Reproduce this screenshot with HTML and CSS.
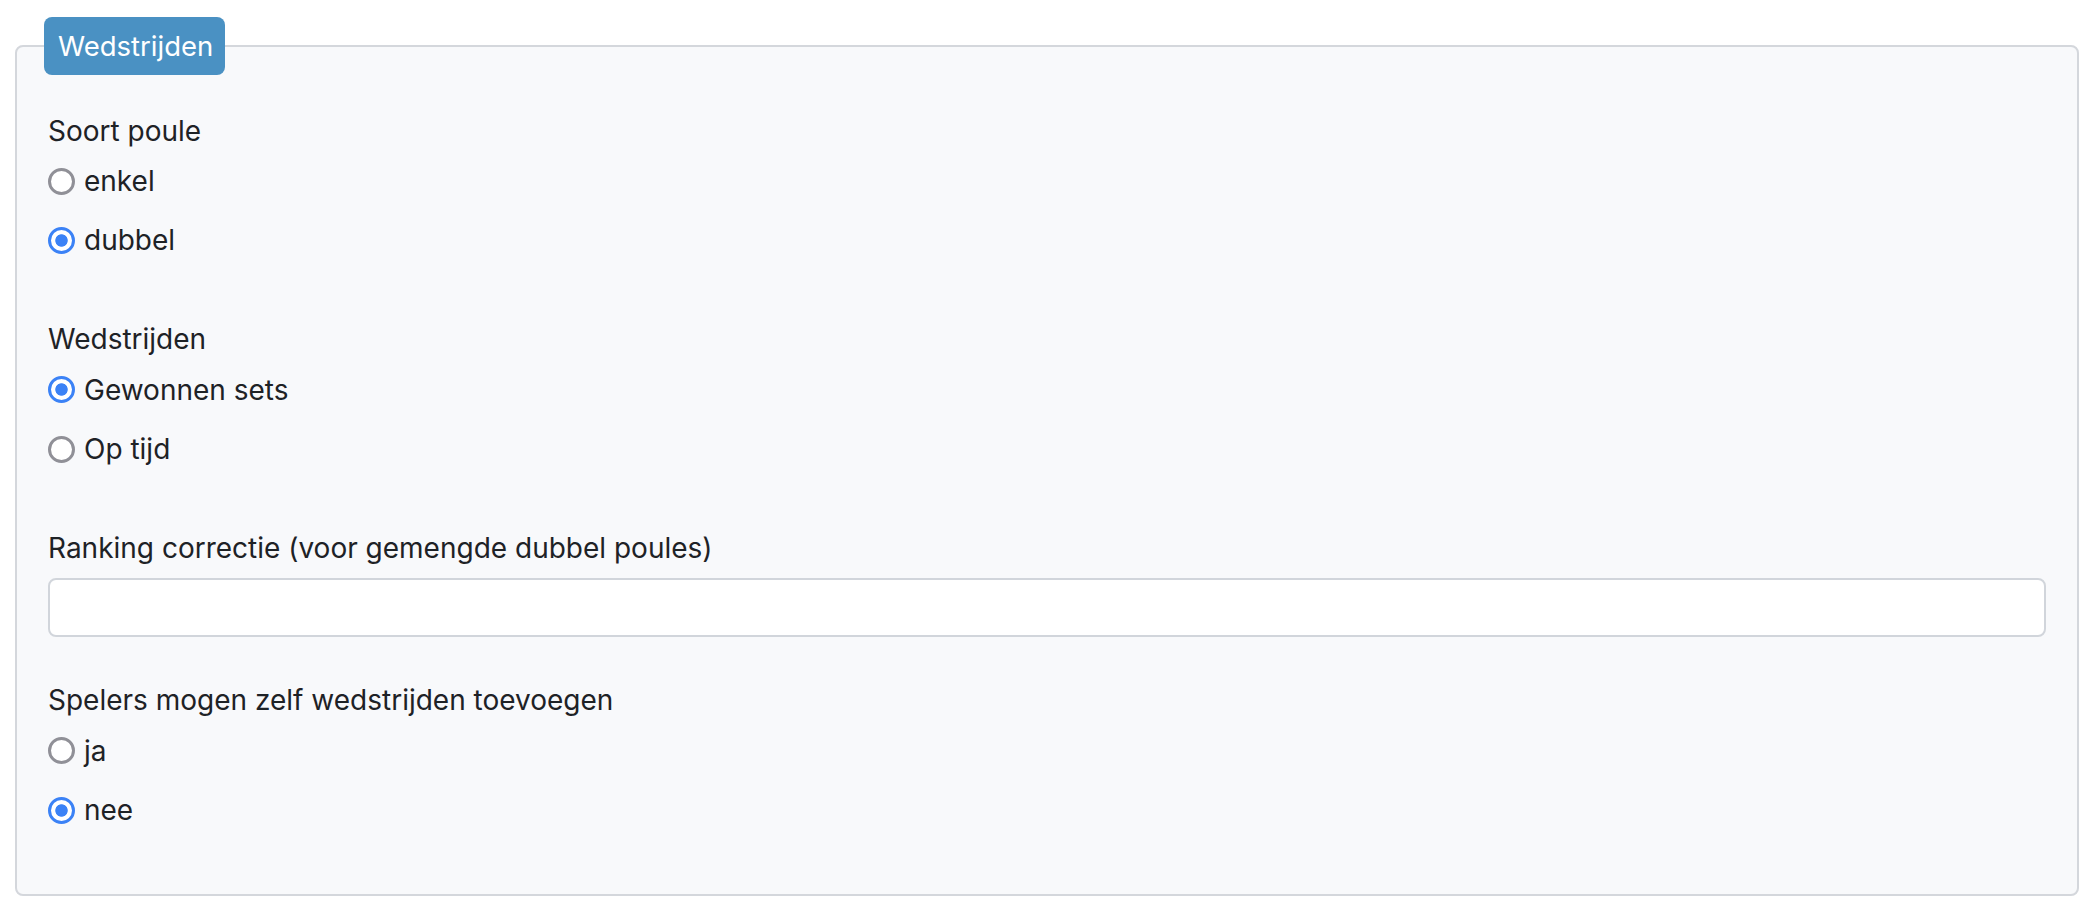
FILE: index.html
```html
<!DOCTYPE html>
<html lang="nl">
<head>
<meta charset="utf-8">
<title>Wedstrijden</title>
<link rel="stylesheet" href="styles.css">
</head>
<body>
<fieldset class="panel">
  <legend class="panel-title">Wedstrijden</legend>

  <div class="group group-radio">
    <div class="group-label">Soort poule</div>
    <div class="options">
      <label class="option"><input type="radio" name="poule" class="radio"><span>enkel</span></label>
      <label class="option"><input type="radio" name="poule" class="radio" checked><span>dubbel</span></label>
    </div>
  </div>

  <div class="group group-radio">
    <div class="group-label">Wedstrijden</div>
    <div class="options">
      <label class="option"><input type="radio" name="wedstrijden" class="radio" checked><span>Gewonnen sets</span></label>
      <label class="option"><input type="radio" name="wedstrijden" class="radio"><span>Op tijd</span></label>
    </div>
  </div>

  <div class="group group-input">
    <label class="group-label input-label" for="ranking">Ranking correctie (voor gemengde dubbel poules)</label>
    <input type="text" id="ranking" class="text-input">
  </div>

  <div class="group">
    <div class="group-label">Spelers mogen zelf wedstrijden toevoegen</div>
    <div class="options">
      <label class="option"><input type="radio" name="toevoegen" class="radio"><span>ja</span></label>
      <label class="option"><input type="radio" name="toevoegen" class="radio" checked><span>nee</span></label>
    </div>
  </div>
</fieldset>
</body>
</html>
```

FILE: styles.css
```css
* {
  box-sizing: border-box;
}

html, body {
  margin: 0;
  padding: 0;
  background: #ffffff;
}

body {
  font-family: "Inter", "Liberation Sans", sans-serif;
  font-size: 28px;
  line-height: 42px;
  color: #1e2226;
}

.panel {
  margin: 17px 0 0 15px;
  width: 2064px;
  min-width: 0;
  border: 2px solid #d4d7dc;
  border-radius: 8px;
  background: #f8f9fb;
  padding: 34.5px 31px 62.6px 31px;
}

.panel-title {
  margin-left: -4px;
  padding: 8px 12px 8px 14px;
  background: #4a91c3;
  color: #ffffff;
  border-radius: 8px;
  line-height: 42px;
  font-size: 27.5px;
}

.group-radio {
  margin-bottom: 56.9px;
}

.group-input {
  margin-bottom: 42.5px;
}

.group-label {
  display: block;
  line-height: 42px;
  margin-bottom: 8.5px;
}

.input-label {
  margin-bottom: 9.2px;
}

.options {
  display: flex;
  flex-direction: column;
  gap: 17.4px;
}

.option {
  display: flex;
  align-items: center;
  height: 42px;
  gap: 9px;
}

.radio {
  appearance: none;
  -webkit-appearance: none;
  margin: 0;
  width: 27px;
  height: 27px;
  border-radius: 50%;
  border: 3px solid #909097;
  background: #ffffff;
  flex: 0 0 auto;
}

.radio:checked {
  border: 3.5px solid #3b82f6;
  background: radial-gradient(circle, #3b82f6 0, #3b82f6 5.8px, #ffffff 6.6px);
}

.text-input {
  display: block;
  width: 100%;
  height: 58.7px;
  border: 2px solid #d1d5db;
  border-radius: 8px;
  background: #ffffff;
  font: inherit;
  padding: 0 16px;
  margin: 0;
}
```
